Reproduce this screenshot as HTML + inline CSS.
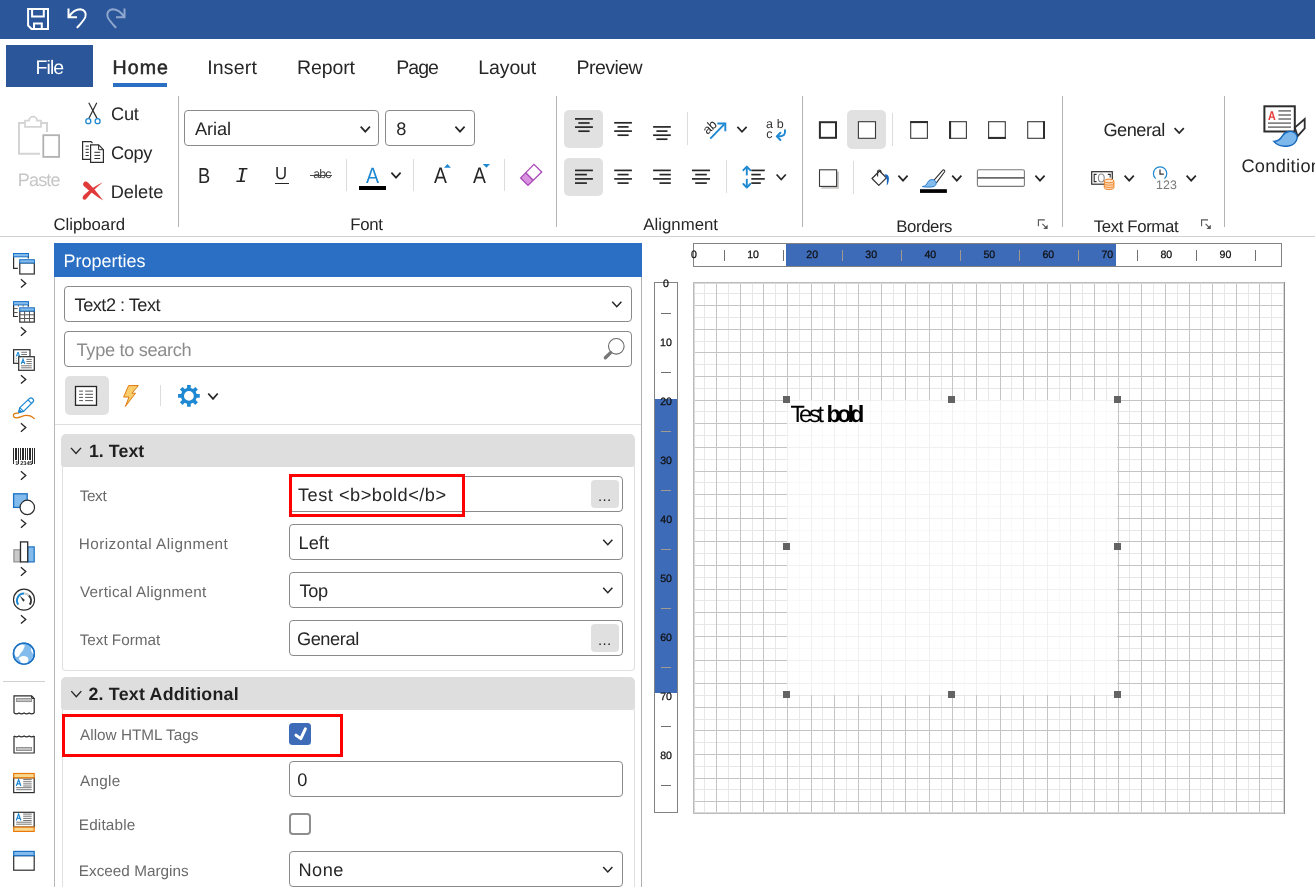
<!DOCTYPE html>
<html lang="en"><head><meta charset="utf-8"><title>Report Designer</title>
<style>
html,body{margin:0;padding:0;background:#fff;}
body{width:1315px;height:887px;overflow:hidden;position:relative;font-family:"Liberation Sans",sans-serif;}
#app{position:absolute;left:0;top:0;width:1315px;height:887px;overflow:hidden;background:#fff;}
#app>div,#app>svg,#tx>span{position:absolute;box-sizing:border-box;}
#tx{left:0;top:0;width:1315px;height:887px;will-change:transform;}
#app svg{overflow:visible;pointer-events:none;}
.t{line-height:1;white-space:pre;text-rendering:geometricPrecision;}
</style></head><body><div id="app">
<div style="left:0px;top:0px;width:1315px;height:39px;background:#2b579a;"></div>
<div style="left:6px;top:45px;width:87px;height:42px;background:#2b579a;"></div>
<div style="left:113px;top:83px;width:54px;height:4px;background:#2a6fc4;"></div>
<div style="left:0px;top:236px;width:1315px;height:1px;background:#d2d2d2;"></div>
<div style="left:178px;top:96px;width:1px;height:131px;background:#b4b4b4;"></div>
<div style="left:556px;top:96px;width:1px;height:131px;background:#b4b4b4;"></div>
<div style="left:802px;top:96px;width:1px;height:131px;background:#b4b4b4;"></div>
<div style="left:1062px;top:96px;width:1px;height:131px;background:#b4b4b4;"></div>
<div style="left:1224px;top:96px;width:1px;height:131px;background:#b4b4b4;"></div>
<div style="left:184px;top:110px;width:195px;height:36px;background:#fff;border:1px solid #8a8a8a;border-radius:4px;"></div>
<div style="left:385px;top:110px;width:90px;height:36px;background:#fff;border:1px solid #8a8a8a;border-radius:4px;"></div>
<svg style="left:0;top:0" width="1315" height="887"><path d="M360.70 126.70 L365.30 131.70 L369.90 126.70" fill="none" stroke="#262626" stroke-width="1.7" stroke-linecap="butt" stroke-linejoin="miter"/></svg>
<svg style="left:0;top:0" width="1315" height="887"><path d="M455.40 126.70 L460.00 131.70 L464.60 126.70" fill="none" stroke="#262626" stroke-width="1.7" stroke-linecap="butt" stroke-linejoin="miter"/></svg>
<div style="left:275px;top:182.6px;width:14px;height:1.4px;background:#262626;"></div>
<div style="left:310px;top:175px;width:22px;height:1px;background:#4a4a4a;"></div>
<div style="left:346px;top:158.5px;width:1px;height:32px;background:#dcdcdc;"></div>
<div style="left:359px;top:186px;width:27px;height:4px;background:#000;"></div>
<svg style="left:0;top:0" width="1315" height="887"><path d="M391.40 172.70 L396.00 177.70 L400.60 172.70" fill="none" stroke="#262626" stroke-width="1.7" stroke-linecap="butt" stroke-linejoin="miter"/></svg>
<div style="left:413px;top:158.5px;width:1px;height:32px;background:#dcdcdc;"></div>
<div style="left:504px;top:158.5px;width:1px;height:32px;background:#dcdcdc;"></div>
<div style="left:564px;top:109.5px;width:39px;height:38.5px;background:#e1e1e1;border-radius:5px;"></div>
<div style="left:564px;top:157.5px;width:39px;height:38.5px;background:#e1e1e1;border-radius:5px;"></div>
<div style="left:687px;top:112px;width:1px;height:32.5px;background:#dcdcdc;"></div>
<div style="left:726px;top:160px;width:1px;height:32.5px;background:#dcdcdc;"></div>
<svg style="left:0;top:0" width="1315" height="887"><path d="M737.40 126.80 L742.00 131.80 L746.60 126.80" fill="none" stroke="#262626" stroke-width="1.7" stroke-linecap="butt" stroke-linejoin="miter"/></svg>
<svg style="left:0;top:0" width="1315" height="887"><path d="M776.60 174.50 L781.20 179.50 L785.80 174.50" fill="none" stroke="#262626" stroke-width="1.7" stroke-linecap="butt" stroke-linejoin="miter"/></svg>
<div style="left:847px;top:110px;width:39px;height:39px;background:#e1e1e1;border-radius:5px;"></div>
<div style="left:892px;top:113px;width:1px;height:32.5px;background:#dcdcdc;"></div>
<div style="left:853px;top:161px;width:1px;height:32.5px;background:#dcdcdc;"></div>
<svg style="left:0;top:0" width="1315" height="887"><path d="M898.40 175.70 L903.00 180.70 L907.60 175.70" fill="none" stroke="#262626" stroke-width="1.7" stroke-linecap="butt" stroke-linejoin="miter"/></svg>
<svg style="left:0;top:0" width="1315" height="887"><path d="M952.20 175.70 L956.80 180.70 L961.40 175.70" fill="none" stroke="#262626" stroke-width="1.7" stroke-linecap="butt" stroke-linejoin="miter"/></svg>
<svg style="left:0;top:0" width="1315" height="887"><path d="M1035.40 175.70 L1040.00 180.70 L1044.60 175.70" fill="none" stroke="#262626" stroke-width="1.7" stroke-linecap="butt" stroke-linejoin="miter"/></svg>
<svg style="left:0;top:0" width="1315" height="887"><path d="M1174.60 128.10 L1179.20 133.10 L1183.80 128.10" fill="none" stroke="#262626" stroke-width="1.7" stroke-linecap="butt" stroke-linejoin="miter"/></svg>
<svg style="left:0;top:0" width="1315" height="887"><path d="M1124.60 175.70 L1129.20 180.70 L1133.80 175.70" fill="none" stroke="#262626" stroke-width="1.7" stroke-linecap="butt" stroke-linejoin="miter"/></svg>
<svg style="left:0;top:0" width="1315" height="887"><path d="M1186.60 175.70 L1191.20 180.70 L1195.80 175.70" fill="none" stroke="#262626" stroke-width="1.7" stroke-linecap="butt" stroke-linejoin="miter"/></svg>
<svg style="left:0;top:0" width="1315" height="887"><path d="M21.45 279.70 L25.75 283.40 L21.45 287.10" fill="none" stroke="#262626" stroke-width="1.35" stroke-linecap="square"/></svg>
<svg style="left:0;top:0" width="1315" height="887"><path d="M21.45 327.80 L25.75 331.50 L21.45 335.20" fill="none" stroke="#262626" stroke-width="1.35" stroke-linecap="square"/></svg>
<svg style="left:0;top:0" width="1315" height="887"><path d="M21.45 375.70 L25.75 379.40 L21.45 383.10" fill="none" stroke="#262626" stroke-width="1.35" stroke-linecap="square"/></svg>
<svg style="left:0;top:0" width="1315" height="887"><path d="M21.45 423.80 L25.75 427.50 L21.45 431.20" fill="none" stroke="#262626" stroke-width="1.35" stroke-linecap="square"/></svg>
<svg style="left:0;top:0" width="1315" height="887"><path d="M21.45 471.80 L25.75 475.50 L21.45 479.20" fill="none" stroke="#262626" stroke-width="1.35" stroke-linecap="square"/></svg>
<svg style="left:0;top:0" width="1315" height="887"><path d="M21.45 519.90 L25.75 523.60 L21.45 527.30" fill="none" stroke="#262626" stroke-width="1.35" stroke-linecap="square"/></svg>
<svg style="left:0;top:0" width="1315" height="887"><path d="M21.45 567.80 L25.75 571.50 L21.45 575.20" fill="none" stroke="#262626" stroke-width="1.35" stroke-linecap="square"/></svg>
<svg style="left:0;top:0" width="1315" height="887"><path d="M21.45 615.70 L25.75 619.40 L21.45 623.10" fill="none" stroke="#262626" stroke-width="1.35" stroke-linecap="square"/></svg>
<div style="left:3px;top:681px;width:42px;height:1px;background:#d0d0d0;"></div>
<div style="left:54px;top:243px;width:588px;height:34px;background:#2a6fc4;"></div>
<div style="left:54px;top:277px;width:1px;height:610px;background:#b8b8b8;"></div>
<div style="left:641px;top:277px;width:1px;height:610px;background:#b0b0b0;"></div>
<div style="left:64px;top:286px;width:568px;height:36px;background:#fff;border:1px solid #8a8a8a;border-radius:4px;"></div>
<svg style="left:0;top:0" width="1315" height="887"><path d="M612.20 301.70 L616.80 306.70 L621.40 301.70" fill="none" stroke="#262626" stroke-width="1.5" stroke-linecap="butt" stroke-linejoin="miter"/></svg>
<div style="left:64px;top:331px;width:568px;height:36px;background:#fff;border:1px solid #8a8a8a;border-radius:4px;"></div>
<div style="left:64.5px;top:376.3px;width:44.2px;height:38.6px;background:#e1e1e1;border-radius:5px;"></div>
<div style="left:160px;top:385px;width:1px;height:21px;background:#dcdcdc;"></div>
<svg style="left:0;top:0" width="1315" height="887"><path d="M208.25 393.50 L213.00 398.90 L217.75 393.50" fill="none" stroke="#262626" stroke-width="1.7" stroke-linecap="butt" stroke-linejoin="miter"/></svg>
<div style="left:55px;top:424px;width:586px;height:1px;background:#dedede;"></div>
<div style="left:61px;top:434px;width:574px;height:32.6px;background:#dedede;border-radius:5px 5px 3px 3px;"></div>
<div style="left:61.5px;top:466px;width:573.2px;height:204.5px;border:1px solid #e0e0e0;border-top:none;border-radius:0 0 4px 4px;"></div>
<svg style="left:0;top:0" width="1315" height="887"><path d="M71.00 447.90 L76.00 453.50 L81.00 447.90" fill="none" stroke="#262626" stroke-width="1.4" stroke-linecap="butt" stroke-linejoin="miter"/></svg>
<div style="left:61px;top:677px;width:574px;height:32.6px;background:#dedede;border-radius:5px 5px 3px 3px;"></div>
<div style="left:61.5px;top:709px;width:573.5px;height:190px;border:1px solid #e0e0e0;border-top:none;"></div>
<svg style="left:0;top:0" width="1315" height="887"><path d="M71.30 691.10 L76.30 696.70 L81.30 691.10" fill="none" stroke="#262626" stroke-width="1.4" stroke-linecap="butt" stroke-linejoin="miter"/></svg>
<div style="left:289px;top:476px;width:334px;height:36px;background:#fff;border:1px solid #8a8a8a;border-radius:4px;"></div>
<div style="left:289px;top:524px;width:334px;height:36px;background:#fff;border:1px solid #8a8a8a;border-radius:4px;"></div>
<div style="left:289px;top:572px;width:334px;height:36px;background:#fff;border:1px solid #8a8a8a;border-radius:4px;"></div>
<div style="left:289px;top:620px;width:334px;height:36px;background:#fff;border:1px solid #8a8a8a;border-radius:4px;"></div>
<div style="left:289px;top:761px;width:334px;height:36px;background:#fff;border:1px solid #8a8a8a;border-radius:4px;"></div>
<div style="left:289px;top:851px;width:334px;height:36px;background:#fff;border:1px solid #8a8a8a;border-radius:4px;"></div>
<div style="left:591px;top:480px;width:27.5px;height:27.5px;background:#e0e0e0;border-radius:4px;"></div>
<div style="left:591px;top:624px;width:27.5px;height:27.5px;background:#e0e0e0;border-radius:4px;"></div>
<svg style="left:0;top:0" width="1315" height="887"><path d="M603.20 539.70 L607.80 544.70 L612.40 539.70" fill="none" stroke="#262626" stroke-width="1.5" stroke-linecap="butt" stroke-linejoin="miter"/></svg>
<svg style="left:0;top:0" width="1315" height="887"><path d="M603.20 587.70 L607.80 592.70 L612.40 587.70" fill="none" stroke="#262626" stroke-width="1.5" stroke-linecap="butt" stroke-linejoin="miter"/></svg>
<svg style="left:0;top:0" width="1315" height="887"><path d="M603.20 866.90 L607.80 871.90 L612.40 866.90" fill="none" stroke="#262626" stroke-width="1.5" stroke-linecap="butt" stroke-linejoin="miter"/></svg>
<div style="left:289px;top:474px;width:175.6px;height:42.5px;border:3px solid #ff0000;"></div>
<div style="left:62px;top:714px;width:281px;height:43px;border:3px solid #ff0000;"></div>
<div style="left:289px;top:723px;width:22px;height:22px;background:#3d6bb8;border-radius:3.5px;"></div>
<svg style="left:289px;top:723px" width="22" height="22" viewBox="0 0 22 22"><path d="M7 12.2 L11.8 15.6 L16.4 5.9" fill="none" stroke="#fff" stroke-width="3" stroke-linecap="round" stroke-linejoin="round"/></svg>
<div style="left:289px;top:813px;width:22px;height:22px;background:#fff;border:2px solid #8e8e8e;border-radius:4px;"></div>
<div style="left:693px;top:243px;width:589px;height:24px;background:#fff;border:1px solid #828282;"></div>
<div style="left:786px;top:244px;width:330px;height:22px;background:#3d6bb8;"></div>
<div style="left:654px;top:282px;width:24px;height:531px;background:#fff;border:1px solid #828282;"></div>
<div style="left:655px;top:399px;width:22px;height:294px;background:#3d6bb8;"></div>
<div style="left:723.5px;top:249.5px;width:1px;height:11px;background:#707070;"></div>
<div style="left:661px;top:312.5px;width:10px;height:1px;background:#707070;"></div>
<div style="left:782.5px;top:249.5px;width:1px;height:11px;background:#707070;"></div>
<div style="left:661px;top:371.5px;width:10px;height:1px;background:#707070;"></div>
<div style="left:841.5px;top:249.5px;width:1px;height:11px;background:#a09a90;"></div>
<div style="left:661px;top:430.5px;width:10px;height:1px;background:#a09a90;"></div>
<div style="left:900.5px;top:249.5px;width:1px;height:11px;background:#a09a90;"></div>
<div style="left:661px;top:489.5px;width:10px;height:1px;background:#a09a90;"></div>
<div style="left:959.5px;top:249.5px;width:1px;height:11px;background:#a09a90;"></div>
<div style="left:661px;top:548.5px;width:10px;height:1px;background:#a09a90;"></div>
<div style="left:1018.5px;top:249.5px;width:1px;height:11px;background:#a09a90;"></div>
<div style="left:661px;top:607.5px;width:10px;height:1px;background:#a09a90;"></div>
<div style="left:1077.5px;top:249.5px;width:1px;height:11px;background:#a09a90;"></div>
<div style="left:661px;top:666.5px;width:10px;height:1px;background:#a09a90;"></div>
<div style="left:1136.5px;top:249.5px;width:1px;height:11px;background:#707070;"></div>
<div style="left:661px;top:725.5px;width:10px;height:1px;background:#707070;"></div>
<div style="left:1195.5px;top:249.5px;width:1px;height:11px;background:#707070;"></div>
<div style="left:661px;top:784.5px;width:10px;height:1px;background:#707070;"></div>
<div style="left:1254.5px;top:249.5px;width:1px;height:11px;background:#707070;"></div>
<svg style="left:0;top:0" width="1315" height="887" shape-rendering="crispEdges"><rect x="704" y="282" width="1" height="532" fill="#e7e7e7"/><rect x="716" y="282" width="1" height="532" fill="#c4c4c4"/><rect x="728" y="282" width="1" height="532" fill="#e7e7e7"/><rect x="740" y="282" width="1" height="532" fill="#c4c4c4"/><rect x="752" y="282" width="1" height="532" fill="#e7e7e7"/><rect x="763" y="282" width="1" height="532" fill="#c4c4c4"/><rect x="775" y="282" width="1" height="532" fill="#e7e7e7"/><rect x="787" y="282" width="1" height="532" fill="#c4c4c4"/><rect x="799" y="282" width="1" height="532" fill="#e7e7e7"/><rect x="811" y="282" width="1" height="532" fill="#c4c4c4"/><rect x="822" y="282" width="1" height="532" fill="#e7e7e7"/><rect x="834" y="282" width="1" height="532" fill="#c4c4c4"/><rect x="846" y="282" width="1" height="532" fill="#e7e7e7"/><rect x="858" y="282" width="1" height="532" fill="#c4c4c4"/><rect x="870" y="282" width="1" height="532" fill="#e7e7e7"/><rect x="881" y="282" width="1" height="532" fill="#c4c4c4"/><rect x="893" y="282" width="1" height="532" fill="#e7e7e7"/><rect x="905" y="282" width="1" height="532" fill="#c4c4c4"/><rect x="917" y="282" width="1" height="532" fill="#e7e7e7"/><rect x="929" y="282" width="1" height="532" fill="#c4c4c4"/><rect x="941" y="282" width="1" height="532" fill="#e7e7e7"/><rect x="952" y="282" width="1" height="532" fill="#c4c4c4"/><rect x="964" y="282" width="1" height="532" fill="#e7e7e7"/><rect x="976" y="282" width="1" height="532" fill="#c4c4c4"/><rect x="988" y="282" width="1" height="532" fill="#e7e7e7"/><rect x="1000" y="282" width="1" height="532" fill="#c4c4c4"/><rect x="1011" y="282" width="1" height="532" fill="#e7e7e7"/><rect x="1023" y="282" width="1" height="532" fill="#c4c4c4"/><rect x="1035" y="282" width="1" height="532" fill="#e7e7e7"/><rect x="1047" y="282" width="1" height="532" fill="#c4c4c4"/><rect x="1059" y="282" width="1" height="532" fill="#e7e7e7"/><rect x="1070" y="282" width="1" height="532" fill="#c4c4c4"/><rect x="1082" y="282" width="1" height="532" fill="#e7e7e7"/><rect x="1094" y="282" width="1" height="532" fill="#c4c4c4"/><rect x="1106" y="282" width="1" height="532" fill="#e7e7e7"/><rect x="1118" y="282" width="1" height="532" fill="#c4c4c4"/><rect x="1129" y="282" width="1" height="532" fill="#e7e7e7"/><rect x="1141" y="282" width="1" height="532" fill="#c4c4c4"/><rect x="1153" y="282" width="1" height="532" fill="#e7e7e7"/><rect x="1165" y="282" width="1" height="532" fill="#c4c4c4"/><rect x="1177" y="282" width="1" height="532" fill="#e7e7e7"/><rect x="1189" y="282" width="1" height="532" fill="#c4c4c4"/><rect x="1200" y="282" width="1" height="532" fill="#e7e7e7"/><rect x="1212" y="282" width="1" height="532" fill="#c4c4c4"/><rect x="1224" y="282" width="1" height="532" fill="#e7e7e7"/><rect x="1236" y="282" width="1" height="532" fill="#c4c4c4"/><rect x="1248" y="282" width="1" height="532" fill="#e7e7e7"/><rect x="1259" y="282" width="1" height="532" fill="#c4c4c4"/><rect x="1271" y="282" width="1" height="532" fill="#e7e7e7"/><rect x="693" y="293" width="592" height="1" fill="#e7e7e7"/><rect x="693" y="305" width="592" height="1" fill="#c4c4c4"/><rect x="693" y="317" width="592" height="1" fill="#e7e7e7"/><rect x="693" y="329" width="592" height="1" fill="#c4c4c4"/><rect x="693" y="341" width="592" height="1" fill="#e7e7e7"/><rect x="693" y="352" width="592" height="1" fill="#c4c4c4"/><rect x="693" y="364" width="592" height="1" fill="#e7e7e7"/><rect x="693" y="376" width="592" height="1" fill="#c4c4c4"/><rect x="693" y="388" width="592" height="1" fill="#e7e7e7"/><rect x="693" y="400" width="592" height="1" fill="#c4c4c4"/><rect x="693" y="411" width="592" height="1" fill="#e7e7e7"/><rect x="693" y="423" width="592" height="1" fill="#c4c4c4"/><rect x="693" y="435" width="592" height="1" fill="#e7e7e7"/><rect x="693" y="447" width="592" height="1" fill="#c4c4c4"/><rect x="693" y="459" width="592" height="1" fill="#e7e7e7"/><rect x="693" y="471" width="592" height="1" fill="#c4c4c4"/><rect x="693" y="482" width="592" height="1" fill="#e7e7e7"/><rect x="693" y="494" width="592" height="1" fill="#c4c4c4"/><rect x="693" y="506" width="592" height="1" fill="#e7e7e7"/><rect x="693" y="518" width="592" height="1" fill="#c4c4c4"/><rect x="693" y="530" width="592" height="1" fill="#e7e7e7"/><rect x="693" y="541" width="592" height="1" fill="#c4c4c4"/><rect x="693" y="553" width="592" height="1" fill="#e7e7e7"/><rect x="693" y="565" width="592" height="1" fill="#c4c4c4"/><rect x="693" y="577" width="592" height="1" fill="#e7e7e7"/><rect x="693" y="589" width="592" height="1" fill="#c4c4c4"/><rect x="693" y="600" width="592" height="1" fill="#e7e7e7"/><rect x="693" y="612" width="592" height="1" fill="#c4c4c4"/><rect x="693" y="624" width="592" height="1" fill="#e7e7e7"/><rect x="693" y="636" width="592" height="1" fill="#c4c4c4"/><rect x="693" y="648" width="592" height="1" fill="#e7e7e7"/><rect x="693" y="660" width="592" height="1" fill="#c4c4c4"/><rect x="693" y="671" width="592" height="1" fill="#e7e7e7"/><rect x="693" y="683" width="592" height="1" fill="#c4c4c4"/><rect x="693" y="695" width="592" height="1" fill="#e7e7e7"/><rect x="693" y="707" width="592" height="1" fill="#c4c4c4"/><rect x="693" y="719" width="592" height="1" fill="#e7e7e7"/><rect x="693" y="730" width="592" height="1" fill="#c4c4c4"/><rect x="693" y="742" width="592" height="1" fill="#e7e7e7"/><rect x="693" y="754" width="592" height="1" fill="#c4c4c4"/><rect x="693" y="766" width="592" height="1" fill="#e7e7e7"/><rect x="693" y="778" width="592" height="1" fill="#c4c4c4"/><rect x="693" y="789" width="592" height="1" fill="#e7e7e7"/><rect x="693" y="801" width="592" height="1" fill="#c4c4c4"/><rect x="716" y="282" width="1" height="532" fill="#c4c4c4"/><rect x="740" y="282" width="1" height="532" fill="#c4c4c4"/><rect x="763" y="282" width="1" height="532" fill="#c4c4c4"/><rect x="787" y="282" width="1" height="532" fill="#c4c4c4"/><rect x="811" y="282" width="1" height="532" fill="#c4c4c4"/><rect x="834" y="282" width="1" height="532" fill="#c4c4c4"/><rect x="858" y="282" width="1" height="532" fill="#c4c4c4"/><rect x="881" y="282" width="1" height="532" fill="#c4c4c4"/><rect x="905" y="282" width="1" height="532" fill="#c4c4c4"/><rect x="929" y="282" width="1" height="532" fill="#c4c4c4"/><rect x="952" y="282" width="1" height="532" fill="#c4c4c4"/><rect x="976" y="282" width="1" height="532" fill="#c4c4c4"/><rect x="1000" y="282" width="1" height="532" fill="#c4c4c4"/><rect x="1023" y="282" width="1" height="532" fill="#c4c4c4"/><rect x="1047" y="282" width="1" height="532" fill="#c4c4c4"/><rect x="1070" y="282" width="1" height="532" fill="#c4c4c4"/><rect x="1094" y="282" width="1" height="532" fill="#c4c4c4"/><rect x="1118" y="282" width="1" height="532" fill="#c4c4c4"/><rect x="1141" y="282" width="1" height="532" fill="#c4c4c4"/><rect x="1165" y="282" width="1" height="532" fill="#c4c4c4"/><rect x="1189" y="282" width="1" height="532" fill="#c4c4c4"/><rect x="1212" y="282" width="1" height="532" fill="#c4c4c4"/><rect x="1236" y="282" width="1" height="532" fill="#c4c4c4"/><rect x="1259" y="282" width="1" height="532" fill="#c4c4c4"/><rect x="694.5" y="283.5" width="589" height="529" fill="none" stroke="#dadada" stroke-width="1"/><rect x="693.5" y="282.5" width="591" height="531" fill="none" stroke="#bcbcbc" stroke-width="1"/><rect x="1284" y="282" width="1" height="532" fill="#8e8e8e"/></svg>
<div style="left:787px;top:400px;width:330px;height:295px;background:rgba(255,255,255,0.74);"></div>
<div style="left:783.2px;top:395.9px;width:7px;height:7px;background:#636363;"></div>
<div style="left:783.2px;top:543.3px;width:7px;height:7px;background:#636363;"></div>
<div style="left:783.2px;top:690.7px;width:7px;height:7px;background:#636363;"></div>
<div style="left:948.2px;top:395.9px;width:7px;height:7px;background:#636363;"></div>
<div style="left:948.2px;top:690.7px;width:7px;height:7px;background:#636363;"></div>
<div style="left:1113.7px;top:395.9px;width:7px;height:7px;background:#636363;"></div>
<div style="left:1113.7px;top:543.3px;width:7px;height:7px;background:#636363;"></div>
<div style="left:1113.7px;top:690.7px;width:7px;height:7px;background:#636363;"></div>
<svg style="left:0;top:0" width="1315" height="887" viewBox="0 0 1315 887"><path d="M28.1 9 H48 V29 H31.6 L28.1 25.5 Z" fill="none" stroke="#ffffff" stroke-width="2" /><path d="M32.1 9 V16.4 H43.8 V9" fill="none" stroke="#ffffff" stroke-width="2" /><path d="M34 29 V23.4 H41.8 V29" fill="none" stroke="#ffffff" stroke-width="2" /><path d="M68.5 8.4 V17.3 H77 M68.8 17 C72 12 76 9.3 80.5 9.3 C85 9.8 86.5 13.5 85.3 17 C84 20.5 80 24.5 76.9 27.9" fill="none" stroke="#ffffff" stroke-width="2" stroke-linecap="butt"/><path d="M124.5 8.4 V17.3 H116 M124.2 17 C121 12 117 9.3 112.5 9.3 C108 9.8 106.5 13.5 107.7 17 C109 20.5 113 24.5 116.1 27.9" fill="none" stroke="#8fa6cd" stroke-width="2" /><path d="M47 132 V123 H19 V153.8 H40" fill="none" stroke="#d4d4d4" stroke-width="2" /><path d="M25 126.8 V120.6 H29 A4 4 0 0 1 37 120.6 H41 V126.8 Z" fill="#fff" stroke="#d4d4d4" stroke-width="1.8" /><rect x="43.30" y="135.20" width="15.80" height="21.70" rx="0" fill="#fff" stroke="#b2b2b2" stroke-width="1.8" /><line x1="88.80" y1="102.70" x2="97.00" y2="118.40" stroke="#2d2d2d" stroke-width="1.2" /><line x1="96.80" y1="102.70" x2="88.80" y2="118.40" stroke="#2d2d2d" stroke-width="1.2" /><circle cx="88.30" cy="121.20" r="2.50" fill="none" stroke="#1e88d2" stroke-width="1.3"/><circle cx="97.60" cy="121.20" r="2.50" fill="none" stroke="#1e88d2" stroke-width="1.3"/><path d="M90 159.4 H82.6 V141.6 H91 L92.5 143" fill="none" stroke="#2d2d2d" stroke-width="1.2" /><line x1="85.60" y1="146.10" x2="88.80" y2="146.10" stroke="#2d2d2d" stroke-width="1" /><line x1="85.60" y1="149.30" x2="88.80" y2="149.30" stroke="#2d2d2d" stroke-width="1" /><line x1="85.60" y1="152.40" x2="88.80" y2="152.40" stroke="#2d2d2d" stroke-width="1" /><line x1="85.60" y1="155.50" x2="88.80" y2="155.50" stroke="#2d2d2d" stroke-width="1" /><path d="M90.6 144.9 H98.6 L103.4 149.7 V162.4 H90.6 Z" fill="#fff" stroke="#2d2d2d" stroke-width="1.2" /><path d="M98.6 144.9 V149.7 H103.4" fill="none" stroke="#2d2d2d" stroke-width="1" /><line x1="94.40" y1="152.30" x2="100.20" y2="152.30" stroke="#2d2d2d" stroke-width="1" /><line x1="94.40" y1="155.40" x2="100.20" y2="155.40" stroke="#2d2d2d" stroke-width="1" /><line x1="94.40" y1="158.50" x2="100.20" y2="158.50" stroke="#2d2d2d" stroke-width="1" /><path d="M83.2 183.6 C84 181.2 86.5 181 88 182.6 C93 187.5 98 193.5 103.2 200.6 C97 196.5 90 191.5 84 186.2 C83 185.3 83 184.4 83.2 183.6 Z" fill="#e03a3a" stroke="none" stroke-width="0" /><path d="M103 182.2 C97 186.5 91.5 192 86.6 198.6 C85.4 200.2 83.4 200.3 82.8 198.8 C82.3 197.4 83 196 84.2 194.8 C90 189.5 96 185.3 103 182.2 Z" fill="#e03a3a" stroke="none" stroke-width="0" /><path d="M444 167.7 L447.4 164.1 L450.9 167.7 Z" fill="#1e88d2" stroke="none" stroke-width="0" /><path d="M482.8 164.1 H490 L486.4 167.7 Z" fill="#1e88d2" stroke="none" stroke-width="0" /><path d="M520.6 177.9 L525.8 172.7 L533.2 180.2 L528 185.4 Z" fill="#d992df" stroke="none" stroke-width="0" /><path d="M534 164.4 L541.7 172 L528 185.4 L520.6 177.9 Z M525.8 172.7 L533.2 180.2" fill="none" stroke="#a646b6" stroke-width="1.3" stroke-linejoin="miter"/><line x1="575.00" y1="118.90" x2="592.90" y2="118.90" stroke="#262626" stroke-width="1.7" /><line x1="578.30" y1="123.00" x2="589.60" y2="123.00" stroke="#262626" stroke-width="1.7" /><line x1="575.00" y1="127.10" x2="592.90" y2="127.10" stroke="#262626" stroke-width="1.7" /><line x1="578.30" y1="131.20" x2="589.60" y2="131.20" stroke="#262626" stroke-width="1.7" /><line x1="614.20" y1="122.80" x2="631.90" y2="122.80" stroke="#262626" stroke-width="1.7" /><line x1="617.50" y1="126.90" x2="628.60" y2="126.90" stroke="#262626" stroke-width="1.7" /><line x1="614.20" y1="131.10" x2="631.90" y2="131.10" stroke="#262626" stroke-width="1.7" /><line x1="617.50" y1="135.20" x2="628.60" y2="135.20" stroke="#262626" stroke-width="1.7" /><line x1="653.10" y1="126.90" x2="670.80" y2="126.90" stroke="#262626" stroke-width="1.7" /><line x1="656.40" y1="131.10" x2="667.50" y2="131.10" stroke="#262626" stroke-width="1.7" /><line x1="653.10" y1="135.20" x2="670.80" y2="135.20" stroke="#262626" stroke-width="1.7" /><line x1="656.40" y1="139.20" x2="667.50" y2="139.20" stroke="#262626" stroke-width="1.7" /><line x1="575.00" y1="170.40" x2="592.90" y2="170.40" stroke="#262626" stroke-width="1.7" /><line x1="575.00" y1="174.60" x2="586.90" y2="174.60" stroke="#262626" stroke-width="1.7" /><line x1="575.00" y1="178.90" x2="592.90" y2="178.90" stroke="#262626" stroke-width="1.7" /><line x1="575.00" y1="183.10" x2="586.90" y2="183.10" stroke="#262626" stroke-width="1.7" /><line x1="614.20" y1="170.40" x2="631.90" y2="170.40" stroke="#262626" stroke-width="1.7" /><line x1="617.50" y1="174.60" x2="628.60" y2="174.60" stroke="#262626" stroke-width="1.7" /><line x1="614.20" y1="178.90" x2="631.90" y2="178.90" stroke="#262626" stroke-width="1.7" /><line x1="617.50" y1="183.10" x2="628.60" y2="183.10" stroke="#262626" stroke-width="1.7" /><line x1="653.10" y1="170.40" x2="670.80" y2="170.40" stroke="#262626" stroke-width="1.7" /><line x1="659.50" y1="174.60" x2="670.80" y2="174.60" stroke="#262626" stroke-width="1.7" /><line x1="653.10" y1="178.90" x2="670.80" y2="178.90" stroke="#262626" stroke-width="1.7" /><line x1="659.50" y1="183.10" x2="670.80" y2="183.10" stroke="#262626" stroke-width="1.7" /><line x1="692.00" y1="170.40" x2="710.00" y2="170.40" stroke="#262626" stroke-width="1.7" /><line x1="695.20" y1="174.60" x2="706.80" y2="174.60" stroke="#262626" stroke-width="1.7" /><line x1="692.00" y1="178.90" x2="710.00" y2="178.90" stroke="#262626" stroke-width="1.7" /><line x1="695.20" y1="183.10" x2="706.80" y2="183.10" stroke="#262626" stroke-width="1.7" /><line x1="710.30" y1="138.60" x2="724.40" y2="124.20" stroke="#1e88d2" stroke-width="1.9" /><path d="M717.4 123.5 H725.3 V131.2" fill="none" stroke="#1e88d2" stroke-width="1.9" /><path d="M785 130.2 C785.6 134.6 783.6 136.4 778 136.4 M780.4 132.8 L776.8 136.4 L780.4 140" fill="none" stroke="#1e88d2" stroke-width="2" stroke-linecap="round" stroke-linejoin="round"/><line x1="746.80" y1="167.20" x2="746.80" y2="175.40" stroke="#1e88d2" stroke-width="1.9" /><line x1="746.80" y1="178.80" x2="746.80" y2="187.00" stroke="#1e88d2" stroke-width="1.9" /><path d="M743.4 170.2 L746.8 166.6 L750.2 170.2 M743.4 184 L746.8 187.6 L750.2 184" fill="none" stroke="#1e88d2" stroke-width="1.9" stroke-linecap="round" stroke-linejoin="round"/><line x1="751.30" y1="170.40" x2="764.80" y2="170.40" stroke="#262626" stroke-width="1.7" /><line x1="751.30" y1="174.60" x2="760.80" y2="174.60" stroke="#262626" stroke-width="1.7" /><line x1="751.30" y1="178.90" x2="764.80" y2="178.90" stroke="#262626" stroke-width="1.7" /><line x1="751.30" y1="183.10" x2="760.80" y2="183.10" stroke="#262626" stroke-width="1.7" /><rect x="819.90" y="122.20" width="16.10" height="15.60" rx="0" fill="none" stroke="#2d2d2d" stroke-width="2" /><rect x="858.40" y="121.70" width="17.10" height="16.60" rx="0" fill="#fff" stroke="#3a3a3a" stroke-width="1.1" /><rect x="910.70" y="121.70" width="16.70" height="16.60" rx="0" fill="none" stroke="#3a3a3a" stroke-width="1.1" /><line x1="910.20" y1="122.10" x2="927.90" y2="122.10" stroke="#2d2d2d" stroke-width="2" /><rect x="949.70" y="121.70" width="16.70" height="16.60" rx="0" fill="none" stroke="#3a3a3a" stroke-width="1.1" /><line x1="950.10" y1="121.20" x2="950.10" y2="138.80" stroke="#2d2d2d" stroke-width="2" /><rect x="988.60" y="121.70" width="16.70" height="16.60" rx="0" fill="none" stroke="#3a3a3a" stroke-width="1.1" /><line x1="988.10" y1="137.90" x2="1005.80" y2="137.90" stroke="#2d2d2d" stroke-width="2" /><rect x="1027.70" y="121.70" width="16.70" height="16.60" rx="0" fill="none" stroke="#3a3a3a" stroke-width="1.1" /><line x1="1044.00" y1="121.20" x2="1044.00" y2="138.80" stroke="#2d2d2d" stroke-width="2" /><rect x="821.40" y="171.70" width="17.50" height="17.00" rx="0" fill="#c8c6c4" stroke="none" stroke-width="0" /><rect x="819.50" y="169.80" width="17.10" height="16.60" rx="0" fill="#fff" stroke="#3a3a3a" stroke-width="1.1" /><path d="M872 178.5 L879.6 171 L886.4 177.8 L878.8 185.4 Z" fill="#fff" stroke="#2d2d2d" stroke-width="1.2" stroke-linejoin="round"/><path d="M877.6 176.6 V171.6 C877.6 169.4 881 169.4 881 171.6 V172.4" fill="none" stroke="#2d2d2d" stroke-width="1.1" /><path d="M884.6 174.4 C888.2 174 889.4 177 888.8 180.2 C888.5 182.4 888 184.4 886.8 185.6 C887 182 887 179 886.3 177.6 Z" fill="#1565c0" stroke="none" stroke-width="0" /><path d="M933.6 180.6 L942.6 170.4 C943.6 169.2 945.4 170.4 944.6 171.8 L936.4 182.8" fill="#fff" stroke="#2d2d2d" stroke-width="1.1" /><path d="M922.4 186.6 C925.5 186.3 926.6 184.6 927.6 182.4 C929 179.4 933 178.6 935.2 180.8 C937.4 183.2 936 186.8 931.4 187 C928 187.2 925 187.2 922.4 186.6 Z" fill="#83bcec" stroke="#1a70c4" stroke-width="0.9" /><rect x="920.00" y="189.20" width="26.90" height="3.70" rx="0" fill="#000" stroke="none" stroke-width="0" /><rect x="977.40" y="169.80" width="47.00" height="16.60" rx="1.5" fill="#fff" stroke="#7a7a7a" stroke-width="1.1" /><line x1="977.40" y1="177.90" x2="1024.40" y2="177.90" stroke="#6a6a6a" stroke-width="1.6" /><path d="M1038.3999999999999 226.3 V219.9 H1044.8" fill="none" stroke="#555" stroke-width="1.1" /><path d="M1042.3999999999999 223.9 L1046.3999999999999 227.9" fill="none" stroke="#555" stroke-width="1.1" /><path d="M1047.6 224.70000000000002 V229.10000000000002 H1043.2 Z" fill="#555" stroke="none" stroke-width="0" /><path d="M1201.6 226.3 V219.9 H1208" fill="none" stroke="#555" stroke-width="1.1" /><path d="M1205.6 223.9 L1209.6 227.9" fill="none" stroke="#555" stroke-width="1.1" /><path d="M1210.8 224.70000000000002 V229.10000000000002 H1206.4 Z" fill="#555" stroke="none" stroke-width="0" /><rect x="1091.70" y="171.70" width="20.60" height="12.50" rx="0" fill="none" stroke="#2d2d2d" stroke-width="1.2" /><path d="M1096.6 174.4 H1094.2 V181.6 H1096.6 M1107.8 174.4 H1110.2 V177.6" fill="none" stroke="#2d2d2d" stroke-width="1.1" /><ellipse cx="1101.3" cy="178" rx="2.9" ry="4" fill="none" stroke="#8a8a8a" stroke-width="1.1"/><path d="M1104.3 181 V187.6 C1104.3 190.2 1113.9 190.2 1113.9 187.6 V181" fill="#fbd9b4" stroke="#ee8428" stroke-width="1" /><ellipse cx="1109.1" cy="181" rx="4.8" ry="1.9" fill="#fde6cc" stroke="#ee8428" stroke-width="1"/><path d="M1104.3 183.3 C1104.3 185.8 1113.9 185.8 1113.9 183.3 M1104.3 185.6 C1104.3 188.1 1113.9 188.1 1113.9 185.6" fill="none" stroke="#ee8428" stroke-width="0.9" /><path d="M1155.7 178.6 A6.7 6.7 0 1 1 1164.5 178.6" fill="none" stroke="#1e88d2" stroke-width="1.2" /><path d="M1160 169.6 V174.2 H1163.8" fill="none" stroke="#333" stroke-width="1.2" /><rect x="1264.40" y="106.30" width="30.40" height="25.20" rx="0" fill="#fff" stroke="#2d2d2d" stroke-width="2" /><line x1="1278.40" y1="110.90" x2="1291.00" y2="110.90" stroke="#5a5a5a" stroke-width="1.3" /><line x1="1278.40" y1="115.00" x2="1291.00" y2="115.00" stroke="#5a5a5a" stroke-width="1.3" /><line x1="1278.40" y1="119.00" x2="1291.00" y2="119.00" stroke="#5a5a5a" stroke-width="1.3" /><line x1="1268.00" y1="123.10" x2="1291.00" y2="123.10" stroke="#5a5a5a" stroke-width="1.3" /><line x1="1268.00" y1="127.10" x2="1291.00" y2="127.10" stroke="#5a5a5a" stroke-width="1.3" /><path d="M1294.8 127.6 L1304.7 119 V128.4 L1297.6 136.2 Z" fill="#fff" stroke="#2d2d2d" stroke-width="1.8" /><path d="M1273.8 141.4 C1279 141.4 1281 138.6 1282.8 135.4 C1285.4 130.8 1292.4 130.2 1295.6 133.6 C1299 137.4 1296.4 144.6 1288.4 146 C1282 147 1276.6 144.8 1273.8 141.4 Z" fill="#7db8ec" stroke="#1667be" stroke-width="1.4" /><rect x="75.50" y="386.50" width="21.00" height="18.80" rx="0" fill="#fff" stroke="#262626" stroke-width="1.3" /><line x1="79.10" y1="391.10" x2="83.00" y2="391.10" stroke="#555" stroke-width="1" /><line x1="85.20" y1="391.10" x2="93.00" y2="391.10" stroke="#555" stroke-width="1" /><line x1="79.10" y1="394.30" x2="83.00" y2="394.30" stroke="#555" stroke-width="1" /><line x1="85.20" y1="394.30" x2="93.00" y2="394.30" stroke="#555" stroke-width="1" /><line x1="79.10" y1="397.40" x2="83.00" y2="397.40" stroke="#555" stroke-width="1" /><line x1="85.20" y1="397.40" x2="93.00" y2="397.40" stroke="#555" stroke-width="1" /><line x1="79.10" y1="400.60" x2="83.00" y2="400.60" stroke="#555" stroke-width="1" /><line x1="85.20" y1="400.60" x2="93.00" y2="400.60" stroke="#555" stroke-width="1" /><path d="M128.6 385.6 H138.3 L132 393.2 H135.5 L125.4 406.4 L129 397 H123.6 Z" fill="#f9cc6c" stroke="#e07a10" stroke-width="1" stroke-linejoin="round"/><path d="M187.04 385.06 L190.76 385.06 L190.72 388.11 L193.12 389.10 L195.25 386.92 L197.88 389.55 L195.70 391.68 L196.69 394.08 L199.74 394.04 L199.74 397.76 L196.69 397.72 L195.70 400.12 L197.88 402.25 L195.25 404.88 L193.12 402.70 L190.72 403.69 L190.76 406.74 L187.04 406.74 L187.08 403.69 L184.68 402.70 L182.55 404.88 L179.92 402.25 L182.10 400.12 L181.11 397.72 L178.06 397.76 L178.06 394.04 L181.11 394.08 L182.10 391.68 L179.92 389.55 L182.55 386.92 L184.68 389.10 L187.08 388.11 Z M184.00 395.90 a4.9 4.9 0 1 0 9.8 0 a4.9 4.9 0 1 0 -9.8 0 Z" fill="#1e88d2" fill-rule="evenodd"/><circle cx="616.30" cy="346.30" r="7.80" fill="#fff" stroke="#6a6a6a" stroke-width="1.1"/><line x1="610.60" y1="352.60" x2="605.40" y2="357.80" stroke="#777" stroke-width="3.4" stroke-linecap="round"/><path d="M17.9 268.4 H13.6 V256.6" fill="none" stroke="#2d2d2d" stroke-width="1.2" /><path d="M28.3 256.6 V258.6" fill="none" stroke="#2d2d2d" stroke-width="1.2" /><rect x="13.50" y="253.50" width="15.00" height="3.30" rx="0" fill="#83bcec" stroke="#1a70c4" stroke-width="1" /><rect x="19.80" y="262.90" width="14.50" height="11.10" rx="0" fill="#fff" stroke="#2d2d2d" stroke-width="1.2" /><rect x="19.70" y="259.70" width="14.70" height="3.30" rx="0" fill="#83bcec" stroke="#1a70c4" stroke-width="1" /><path d="M17.9 316.5 H13.6 V304.70000000000005" fill="none" stroke="#2d2d2d" stroke-width="1.2" /><path d="M28.3 304.70000000000005 V306.70000000000005" fill="none" stroke="#2d2d2d" stroke-width="1.2" /><rect x="13.50" y="301.60" width="15.00" height="3.30" rx="0" fill="#83bcec" stroke="#1a70c4" stroke-width="1" /><line x1="13.60" y1="308.60" x2="17.60" y2="308.60" stroke="#555" stroke-width="1" /><line x1="13.60" y1="312.50" x2="17.60" y2="312.50" stroke="#555" stroke-width="1" /><line x1="18.40" y1="305.10" x2="18.40" y2="306.50" stroke="#555" stroke-width="1" /><line x1="23.20" y1="305.10" x2="23.20" y2="306.50" stroke="#555" stroke-width="1" /><rect x="19.80" y="311.00" width="14.50" height="11.10" rx="0" fill="#fff" stroke="#2d2d2d" stroke-width="1.2" /><rect x="19.70" y="307.80" width="14.70" height="3.30" rx="0" fill="#83bcec" stroke="#1a70c4" stroke-width="1" /><line x1="19.80" y1="314.80" x2="34.30" y2="314.80" stroke="#555" stroke-width="1" /><line x1="19.80" y1="318.50" x2="34.30" y2="318.50" stroke="#555" stroke-width="1" /><line x1="24.60" y1="311.10" x2="24.60" y2="322.10" stroke="#555" stroke-width="1" /><line x1="29.50" y1="311.10" x2="29.50" y2="322.10" stroke="#555" stroke-width="1" /><rect x="13.60" y="349.70" width="16.40" height="13.60" rx="0" fill="#fff" stroke="#2d2d2d" stroke-width="1.2" /><path d="M16.2 356.6 L18 352 L19.8 356.6 M16.9 355.1 H19.1" fill="none" stroke="#1e88d2" stroke-width="1" /><line x1="21.30" y1="352.30" x2="27.00" y2="352.30" stroke="#666" stroke-width="0.9" /><line x1="21.30" y1="354.50" x2="27.00" y2="354.50" stroke="#666" stroke-width="0.9" /><line x1="15.80" y1="358.60" x2="16.60" y2="358.60" stroke="#666" stroke-width="0.9" /><line x1="15.80" y1="360.80" x2="16.60" y2="360.80" stroke="#666" stroke-width="0.9" /><rect x="18.70" y="356.70" width="15.60" height="13.60" rx="0" fill="#fff" stroke="#2d2d2d" stroke-width="1.2" /><path d="M21.2 364 L23 359 L24.8 364 M21.9 362.4 H24.1" fill="none" stroke="#1e88d2" stroke-width="1.1" /><line x1="26.40" y1="359.40" x2="31.80" y2="359.40" stroke="#666" stroke-width="0.9" /><line x1="26.40" y1="361.50" x2="31.80" y2="361.50" stroke="#666" stroke-width="0.9" /><line x1="26.40" y1="363.60" x2="31.80" y2="363.60" stroke="#666" stroke-width="0.9" /><line x1="21.10" y1="365.80" x2="31.80" y2="365.80" stroke="#666" stroke-width="0.9" /><line x1="21.10" y1="367.80" x2="31.80" y2="367.80" stroke="#666" stroke-width="0.9" /><path d="M18.6 412.6 L19.8 407.6 L29.6 398.4 C31.4 396.8 34.8 399.8 33.2 401.8 L23.6 411.4 Z" fill="#fff" stroke="#1e88d2" stroke-width="1.3" stroke-linejoin="round"/><path d="M19.8 407.6 L23.6 411.4 M28 400 L31.6 403.4" fill="none" stroke="#1e88d2" stroke-width="1.1" /><path d="M18.6 412.6 L19.4 409.4 L22 411.8 Z" fill="#1e88d2" stroke="#1e88d2" stroke-width="0.8" /><path d="M18.4 413.2 C15 412.6 13 414 13.4 416 C14 418.6 18 418 21.4 416.6 C25.6 414.8 30 414.4 34.4 418.6" fill="none" stroke="#e07a10" stroke-width="1.2" stroke-linecap="round"/><rect x="13" y="448" width="1" height="16" fill="#2a2a2a" shape-rendering="crispEdges"/><rect x="15" y="448" width="2" height="12" fill="#2a2a2a" shape-rendering="crispEdges"/><rect x="18" y="448" width="1" height="16" fill="#2a2a2a" shape-rendering="crispEdges"/><rect x="20" y="448" width="1" height="12" fill="#2a2a2a" shape-rendering="crispEdges"/><rect x="22" y="448" width="2" height="12" fill="#2a2a2a" shape-rendering="crispEdges"/><rect x="25" y="448" width="1" height="12" fill="#2a2a2a" shape-rendering="crispEdges"/><rect x="27" y="448" width="1" height="12" fill="#2a2a2a" shape-rendering="crispEdges"/><rect x="29" y="448" width="2" height="12" fill="#2a2a2a" shape-rendering="crispEdges"/><rect x="32" y="448" width="1" height="16" fill="#2a2a2a" shape-rendering="crispEdges"/><rect x="34" y="448" width="1" height="16" fill="#2a2a2a" shape-rendering="crispEdges"/><rect x="13.60" y="493.80" width="13.60" height="13.60" rx="0" fill="#83bcec" stroke="#1a70c4" stroke-width="1.3" /><circle cx="27.30" cy="507.40" r="7.20" fill="#fff" stroke="#2d2d2d" stroke-width="1.2"/><rect x="13.90" y="549.80" width="6.40" height="12.10" rx="0" fill="#c9c9c9" stroke="#8a8a8a" stroke-width="1.1" /><rect x="27.70" y="546.90" width="6.50" height="15.00" rx="0" fill="#83bcec" stroke="#1a70c4" stroke-width="1.2" /><rect x="20.50" y="541.90" width="7.20" height="20.00" rx="0" fill="#fff" stroke="#2d2d2d" stroke-width="1.3" /><circle cx="24.00" cy="599.70" r="10.50" fill="#fff" stroke="#2d2d2d" stroke-width="1.2"/><path d="M18.27 604.62 A7 7 0 0 1 24.24 593.60" fill="none" stroke="#1e88d2" stroke-width="2.0" /><path d="M24.49 593.62 A7 7 0 0 1 28.68 595.40" fill="none" stroke="#c8c8c8" stroke-width="2.0" /><path d="M28.86 595.56 A7 7 0 0 1 29.73 604.62" fill="none" stroke="#333" stroke-width="2.0" /><path d="M19.8 595.8 L24.9 600 L23.2 601.8 Z" fill="#333" stroke="none" stroke-width="0" /><circle cx="23.90" cy="653.70" r="10.50" fill="#83bcec" stroke="#1a70c4" stroke-width="1.3"/><path d="M14.4 652.4 C14.4 648.4 17.4 645.2 21 644.5 C23.6 644.1 25.6 645.4 24.5 647 C23.1 648.8 23.8 650.6 21.8 651.8 C19.8 653 20 655.8 18 656.8 C16 657.6 14.5 655.4 14.4 652.4 Z" fill="#fff" stroke="none" stroke-width="0" /><path d="M18.8 658.6 C19.8 655.8 24 655.2 26.8 656.7 C29 658 28.8 660.8 27.2 662.4 C25.6 663.8 22.6 664.2 21.4 662.8 C20.4 661.6 20.6 660.6 19.6 660 C19 659.6 18.6 659.2 18.8 658.6 Z" fill="#fff" stroke="none" stroke-width="0" /><path d="M31.2 647.6 C32.8 649.4 33.7 651.4 33.7 654 C32.2 653.2 31.4 651.6 31 650 Z" fill="#fff" stroke="none" stroke-width="0" /><circle cx="23.90" cy="653.70" r="10.50" fill="none" stroke="#1a70c4" stroke-width="1.3"/><path d="M14 713 V695.9 H31.6 L34.2 698.5 V713" fill="#fff" stroke="#2d2d2d" stroke-width="1.2" /><path d="M31.6 695.9 V698.5 H34.2" fill="none" stroke="#2d2d2d" stroke-width="1" /><path d="M14 713 q2.53 1.80 5.05 0 q2.53 1.80 5.05 0 q2.53 1.80 5.05 0 q2.53 1.80 5.05 0" fill="none" stroke="#2d2d2d" stroke-width="1.1" /><rect x="16.40" y="698.60" width="15.20" height="3.00" rx="0" fill="#c2c2c2" stroke="#8a8a8a" stroke-width="0.9" /><path d="M14 736 V753 H34.2 V736" fill="#fff" stroke="#2d2d2d" stroke-width="1.2" /><path d="M14 736 q2.53 1.80 5.05 0 q2.53 1.80 5.05 0 q2.53 1.80 5.05 0 q2.53 1.80 5.05 0" fill="none" stroke="#2d2d2d" stroke-width="1.1" /><rect x="16.40" y="747.50" width="15.20" height="3.00" rx="0" fill="#c2c2c2" stroke="#8a8a8a" stroke-width="0.9" /><rect x="13.70" y="777.80" width="20.50" height="14.80" rx="0" fill="#fff" stroke="#2d2d2d" stroke-width="1.2" /><path d="M16.3 786.0 L18.6 779.5999999999999 L20.9 786.0 M17.2 783.9 H20" fill="none" stroke="#1e88d2" stroke-width="1.2" /><line x1="23.20" y1="779.60" x2="31.70" y2="779.60" stroke="#666" stroke-width="0.9" /><line x1="23.20" y1="781.73" x2="31.70" y2="781.73" stroke="#666" stroke-width="0.9" /><line x1="23.20" y1="783.86" x2="31.70" y2="783.86" stroke="#666" stroke-width="0.9" /><line x1="23.20" y1="785.99" x2="31.70" y2="785.99" stroke="#666" stroke-width="0.9" /><line x1="16.20" y1="787.70" x2="31.70" y2="787.70" stroke="#666" stroke-width="0.9" /><line x1="16.20" y1="789.70" x2="31.70" y2="789.70" stroke="#666" stroke-width="0.9" /><rect x="13.70" y="773.50" width="20.50" height="4.30" rx="0" fill="#fad98e" stroke="#e8790c" stroke-width="1.2" /><rect x="13.70" y="812.30" width="20.50" height="14.80" rx="0" fill="#fff" stroke="#2d2d2d" stroke-width="1.2" /><path d="M16.3 820.5 L18.6 814.0999999999999 L20.9 820.5 M17.2 818.4 H20" fill="none" stroke="#1e88d2" stroke-width="1.2" /><line x1="23.20" y1="814.10" x2="31.70" y2="814.10" stroke="#666" stroke-width="0.9" /><line x1="23.20" y1="816.23" x2="31.70" y2="816.23" stroke="#666" stroke-width="0.9" /><line x1="23.20" y1="818.36" x2="31.70" y2="818.36" stroke="#666" stroke-width="0.9" /><line x1="23.20" y1="820.49" x2="31.70" y2="820.49" stroke="#666" stroke-width="0.9" /><line x1="16.20" y1="822.20" x2="31.70" y2="822.20" stroke="#666" stroke-width="0.9" /><line x1="16.20" y1="824.20" x2="31.70" y2="824.20" stroke="#666" stroke-width="0.9" /><rect x="13.70" y="827.10" width="20.50" height="4.30" rx="0" fill="#fad98e" stroke="#e8790c" stroke-width="1.2" /><rect x="13.70" y="855.60" width="20.50" height="14.60" rx="0" fill="#fff" stroke="#2d2d2d" stroke-width="1.2" /><rect x="13.70" y="851.40" width="20.50" height="4.30" rx="0" fill="#83bcec" stroke="#1a70c4" stroke-width="1.2" /></svg>
<div id="tx">
<span class="t" style="left:35.60px;top:59px;font-size:19.5px;color:#fff;letter-spacing:-0.933px;">File</span>
<span class="t" style="left:112.60px;top:59px;font-size:19.6px;color:#262626;letter-spacing:1.000px;-webkit-text-stroke:0.55px #262626;">Home</span>
<span class="t" style="left:207.25px;top:59px;font-size:19.5px;color:#262626;letter-spacing:0.180px;">Insert</span>
<span class="t" style="left:297.10px;top:59px;font-size:19.5px;color:#262626;letter-spacing:-0.120px;">Report</span>
<span class="t" style="left:396.20px;top:59px;font-size:19.5px;color:#262626;letter-spacing:-0.950px;">Page</span>
<span class="t" style="left:478.30px;top:59px;font-size:19.5px;color:#262626;letter-spacing:-0.120px;">Layout</span>
<span class="t" style="left:576.50px;top:59px;font-size:19.5px;color:#262626;letter-spacing:-0.542px;">Preview</span>
<span class="t" style="left:17.70px;top:171px;font-size:18.0px;color:#c6c6c6;letter-spacing:-0.787px;">Paste</span>
<span class="t" style="left:111.10px;top:105px;font-size:18.2px;color:#262626;letter-spacing:-0.325px;">Cut</span>
<span class="t" style="left:111.10px;top:144px;font-size:18.2px;color:#262626;letter-spacing:-0.417px;">Copy</span>
<span class="t" style="left:110.70px;top:183px;font-size:18.2px;color:#262626;letter-spacing:0.030px;">Delete</span>
<span class="t" style="left:53.45px;top:217px;font-size:16.8px;color:#262626;letter-spacing:-0.025px;">Clipboard</span>
<span class="t" style="left:195.10px;top:120px;font-size:18.2px;color:#262626;letter-spacing:-0.137px;">Arial</span>
<span class="t" style="left:396.35px;top:120px;font-size:18.2px;color:#262626;">8</span>
<span class="t" style="left:198.20px;top:165px;font-size:21.8px;color:#262626;transform:scaleX(0.84);transform-origin:left top;">B</span>
<span class="t" style="left:235.20px;top:167px;font-size:21.4px;color:#262626;font-style:italic;font-family:&quot;Liberation Mono&quot;, monospace;">I</span>
<span class="t" style="left:275.20px;top:165px;font-size:17.4px;color:#262626;transform:scaleX(0.96);transform-origin:left top;">U</span>
<span class="t" style="left:313.30px;top:168px;font-size:12.4px;color:#444;letter-spacing:-0.925px;">abc</span>
<span class="t" style="left:366.40px;top:165px;font-size:22px;color:#1e88d2;transform:scaleX(0.89);transform-origin:left top;">A</span>
<span class="t" style="left:434.00px;top:165px;font-size:22.5px;color:#262626;transform:scaleX(0.86);transform-origin:left top;">A</span>
<span class="t" style="left:473.00px;top:165px;font-size:22.5px;color:#262626;transform:scaleX(0.86);transform-origin:left top;">A</span>
<span class="t" style="left:350.35px;top:217px;font-size:16.8px;color:#262626;letter-spacing:-0.350px;">Font</span>
<span class="t" style="left:643.20px;top:217px;font-size:16.8px;color:#262626;letter-spacing:0.025px;">Alignment</span>
<span class="t" style="left:896.35px;top:219px;font-size:16.8px;color:#262626;letter-spacing:-0.433px;">Borders</span>
<span class="t" style="left:1103.40px;top:121px;font-size:18.2px;color:#262626;letter-spacing:-0.467px;">General</span>
<span class="t" style="left:1093.75px;top:219px;font-size:16.8px;color:#262626;letter-spacing:-0.375px;">Text Format</span>
<span class="t" style="left:1241.40px;top:157px;font-size:18.2px;color:#262626;letter-spacing:0.339px;">Conditions</span>
<span class="t" style="left:63.60px;top:252px;font-size:18.0px;color:#fff;letter-spacing:-0.022px;">Properties</span>
<span class="t" style="left:74.60px;top:296px;font-size:18.2px;color:#262626;letter-spacing:-0.518px;">Text2 : Text</span>
<span class="t" style="left:76.60px;top:341px;font-size:18.2px;color:#8c8c8c;letter-spacing:-0.327px;">Type to search</span>
<span class="t" style="left:88.90px;top:443px;font-size:17.8px;color:#1f1f1f;font-weight:bold;letter-spacing:0.058px;">1. Text</span>
<span class="t" style="left:88.40px;top:686px;font-size:17.8px;color:#1f1f1f;font-weight:bold;letter-spacing:0.235px;">2. Text Additional</span>
<span class="t" style="left:79.65px;top:489px;font-size:15.3px;color:#6a6a6a;letter-spacing:-0.350px;">Text</span>
<span class="t" style="left:78.65px;top:537px;font-size:15.3px;color:#6a6a6a;letter-spacing:0.468px;">Horizontal Alignment</span>
<span class="t" style="left:79.90px;top:585px;font-size:15.3px;color:#6a6a6a;letter-spacing:0.282px;">Vertical Alignment</span>
<span class="t" style="left:79.65px;top:633px;font-size:15.3px;color:#6a6a6a;letter-spacing:-0.020px;">Text Format</span>
<span class="t" style="left:80.00px;top:728px;font-size:15.3px;color:#6a6a6a;letter-spacing:0.014px;">Allow HTML Tags</span>
<span class="t" style="left:80.00px;top:774px;font-size:15.3px;color:#6a6a6a;letter-spacing:0.275px;">Angle</span>
<span class="t" style="left:78.75px;top:818px;font-size:15.3px;color:#6a6a6a;letter-spacing:0.179px;">Editable</span>
<span class="t" style="left:78.75px;top:864px;font-size:15.3px;color:#6a6a6a;letter-spacing:0.019px;">Exceed Margins</span>
<span class="t" style="left:597.95px;top:489px;font-size:15px;color:#222;letter-spacing:0.325px;">...</span>
<span class="t" style="left:597.95px;top:633px;font-size:15px;color:#222;letter-spacing:0.325px;">...</span>
<span class="t" style="left:298.00px;top:486px;font-size:18.2px;color:#262626;letter-spacing:0.503px;">Test &lt;b&gt;bold&lt;/b&gt;</span>
<span class="t" style="left:298.50px;top:534px;font-size:18.2px;color:#262626;letter-spacing:0.050px;">Left</span>
<span class="t" style="left:299.50px;top:582px;font-size:18.2px;color:#262626;letter-spacing:-0.300px;">Top</span>
<span class="t" style="left:296.90px;top:630px;font-size:18.2px;color:#262626;letter-spacing:-0.400px;">General</span>
<span class="t" style="left:297.15px;top:771px;font-size:18.2px;color:#262626;">0</span>
<span class="t" style="left:298.50px;top:861px;font-size:18.2px;color:#262626;letter-spacing:0.483px;">None</span>
<span class="t" style="left:691.10px;top:250px;font-size:10.6px;color:#111;-webkit-text-stroke:0.25px #111;">0</span>
<span class="t" style="left:663.10px;top:279px;font-size:10.6px;color:#111;-webkit-text-stroke:0.25px #111;">0</span>
<span class="t" style="left:747.13px;top:250px;font-size:10.6px;color:#111;-webkit-text-stroke:0.25px #111;">10</span>
<span class="t" style="left:660.10px;top:338px;font-size:10.6px;color:#111;-webkit-text-stroke:0.25px #111;">10</span>
<span class="t" style="left:806.29px;top:250px;font-size:10.6px;color:#111;-webkit-text-stroke:0.25px #111;">20</span>
<span class="t" style="left:660.23px;top:397px;font-size:10.6px;color:#111;-webkit-text-stroke:0.25px #111;">20</span>
<span class="t" style="left:865.32px;top:250px;font-size:10.6px;color:#111;-webkit-text-stroke:0.25px #111;">30</span>
<span class="t" style="left:660.23px;top:456px;font-size:10.6px;color:#111;-webkit-text-stroke:0.25px #111;">30</span>
<span class="t" style="left:924.47px;top:250px;font-size:10.6px;color:#111;-webkit-text-stroke:0.25px #111;">40</span>
<span class="t" style="left:660.35px;top:515px;font-size:10.6px;color:#111;-webkit-text-stroke:0.25px #111;">40</span>
<span class="t" style="left:983.38px;top:250px;font-size:10.6px;color:#111;-webkit-text-stroke:0.25px #111;">50</span>
<span class="t" style="left:660.23px;top:574px;font-size:10.6px;color:#111;-webkit-text-stroke:0.25px #111;">50</span>
<span class="t" style="left:1042.40px;top:250px;font-size:10.6px;color:#111;-webkit-text-stroke:0.25px #111;">60</span>
<span class="t" style="left:660.23px;top:633px;font-size:10.6px;color:#111;-webkit-text-stroke:0.25px #111;">60</span>
<span class="t" style="left:1101.44px;top:250px;font-size:10.6px;color:#111;-webkit-text-stroke:0.25px #111;">70</span>
<span class="t" style="left:660.23px;top:692px;font-size:10.6px;color:#111;-webkit-text-stroke:0.25px #111;">70</span>
<span class="t" style="left:1160.46px;top:250px;font-size:10.6px;color:#111;-webkit-text-stroke:0.25px #111;">80</span>
<span class="t" style="left:660.23px;top:751px;font-size:10.6px;color:#111;-webkit-text-stroke:0.25px #111;">80</span>
<span class="t" style="left:1219.50px;top:250px;font-size:10.6px;color:#111;-webkit-text-stroke:0.25px #111;">90</span>
<span class="t" style="left:790.60px;top:403px;font-size:23.5px;color:#000;"><span style="letter-spacing:-3.25px;word-spacing:2.6px">Test </span><b style="letter-spacing:-3.95px">bold</b></span>
<span class="t" style="left:700.20px;top:-11px;font-size:13px;color:#262626;top:126.6px;transform:rotate(-43deg);transform-origin:left top;letter-spacing:-0.3px;">ab</span>
<span class="t" style="left:766.10px;top:118px;font-size:12.5px;color:#333;">a</span>
<span class="t" style="left:776.85px;top:118px;font-size:12.5px;color:#333;">b</span>
<span class="t" style="left:766.30px;top:128px;font-size:12.5px;color:#333;">c</span>
<span class="t" style="left:1155.90px;top:179px;font-size:12.4px;color:#7a7a7a;letter-spacing:0.175px;">123</span>
<span class="t" style="left:1268.20px;top:110px;font-size:12.6px;color:#e53935;font-weight:bold;transform:scaleX(0.85);transform-origin:left top;">A</span>
<span class="t" style="left:15.25px;top:462px;font-size:5.6px;color:#222;font-weight:bold;letter-spacing:-0.6px;">1</span>
<span class="t" style="left:20.35px;top:462px;font-size:5.6px;color:#222;font-weight:bold;letter-spacing:-0.6px;">2</span>
<span class="t" style="left:23.35px;top:462px;font-size:5.6px;color:#222;font-weight:bold;letter-spacing:-0.6px;">3</span>
<span class="t" style="left:26.60px;top:462px;font-size:5.6px;color:#222;font-weight:bold;letter-spacing:-0.6px;">4</span>
<span class="t" style="left:29.35px;top:462px;font-size:5.6px;color:#222;font-weight:bold;letter-spacing:-0.6px;">5</span>
</div>
</div></body></html>
